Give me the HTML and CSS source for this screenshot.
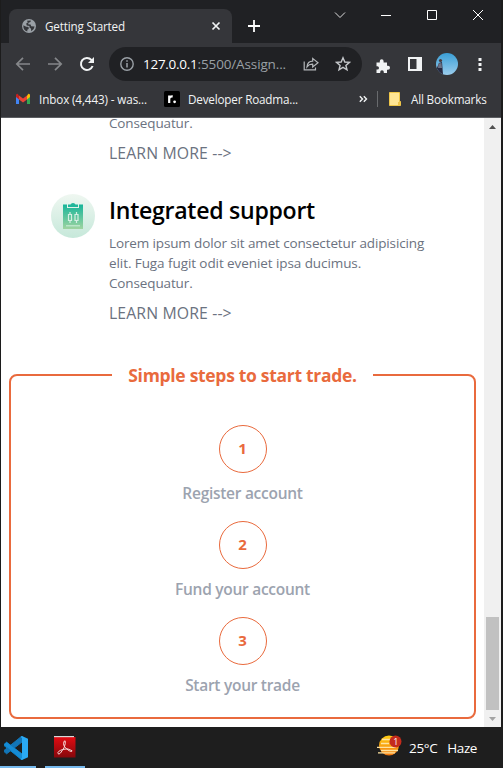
FILE: index.html
```html
<!DOCTYPE html>
<html lang="en">
<head>
<meta charset="utf-8">
<title>Getting Started</title>
<link rel="stylesheet" href="styles.css">
</head>
<body>
<div class="window">
  <header class="tabstrip">
    <div class="tab">
      <svg class="globe" width="14" height="14" viewBox="0 0 14 14"><circle cx="7" cy="7" r="7" fill="#9aa0a6"/><path d="M1.3 6.2 4.2 7.8Q6.4 7.3 6.8 8.8T5.3 10.8V12.6Q1.2 11.5 1.3 6.2ZM5 1.7 8.8 1.5 8.5 3.1 6.5 3.7 6.2 5.3 8.6 5.6 9.2 7.2 12.6 7.4Q12.2 10.7 9.2 12.2L9 9.7 7.3 8.3 7.6 6.9 4.7 6.5 4.2 4.6 5.8 3.4Z" fill="#35363a"/></svg>
      <span class="tab-title">Getting Started</span>
      <svg width="10" height="10" viewBox="0 0 10 10"><path d="M1.5 1.5 8.5 8.5M8.5 1.5 1.5 8.5" stroke="#f1f3f4" stroke-width="1.7"/></svg>
    </div>
    <svg class="new-tab" width="12" height="12" viewBox="0 0 12 12"><path d="M6 0V12M0 6H12" stroke="#fff" stroke-width="1.8"/></svg>
    <div class="controls">
      <svg width="12" height="12" viewBox="0 0 12 12"><path d="M1 3.5 6 8.5 11 3.5" fill="none" stroke="#ddd" stroke-width="1"/></svg>
      <svg width="12" height="12" viewBox="0 0 12 12"><path d="M1 6.5H11" stroke="#fff"/></svg>
      <svg width="12" height="12" viewBox="0 0 12 12"><path d="M1.5 1.5H10.5V10.5H1.5Z" fill="none" stroke="#fff"/></svg>
      <svg width="12" height="12" viewBox="0 0 12 12"><path d="M1 1 11 11M11 1 1 11" stroke="#fff"/></svg>
    </div>
  </header>
  <div class="toolbar">
    <svg class="nav" width="16" height="16" viewBox="0 0 16 16"><path d="M15 8H2M8 1.8 1.8 8 8 14.2" fill="none" stroke="#85878a" stroke-width="1.7"/></svg>
    <svg class="nav" width="16" height="16" viewBox="0 0 16 16"><path d="M1 8H14M8 1.8 14.2 8 8 14.2" fill="none" stroke="#85878a" stroke-width="1.7"/></svg>
    <svg class="nav" width="16" height="16" viewBox="0 0 16 16"><path d="M13.6 10A6 6 0 1 1 12.4 3.9L14 5.5" fill="none" stroke="#f1f3f4" stroke-width="2"/><path d="M15 1V7H9Z" fill="#f1f3f4"/></svg>
    <div class="address">
      <svg width="14" height="14" viewBox="0 0 14 14"><circle cx="7" cy="7" r="6.2" fill="none" stroke="#9aa0a6" stroke-width="1.4"/><path d="M7 6V10.5M7 3.3V4.8" stroke="#9aa0a6" stroke-width="1.5"/></svg>
      <span class="url"><span class="host">127.0.0.1</span>:5500/Assign...</span>
      <svg class="share" width="16" height="16" viewBox="0 0 16 16"><path d="M1.2 5.5V13.8H12.5V11.5M4 10.8Q4.5 5.2 9.7 5.2V2.4L15 6.7 9.7 11V8.2Q6 8 4 10.8Z" fill="none" stroke="#b4b7ba" stroke-width="1.2"/></svg>
      <svg width="16" height="16" viewBox="0 0 16 16"><path d="M8 1.8 9.8 6 14.4 6.4 10.9 9.4 12 13.8 8 11.4 4 13.8 5.1 9.4 1.6 6.4 6.2 6Z" fill="none" stroke="#c4c7ca" stroke-width="1.4"/></svg>
    </div>
    <div class="actions">
      <svg width="16" height="16" viewBox="0 0 16 16"><path d="M1.5 4.5H4.8V3.2A1.9 1.9 0 0 1 8.6 3.2V4.5H12V7.8H13A2 2 0 0 1 13 11.8H12V15H8.8V14A1.7 1.7 0 0 0 5.2 14V15H1.5V11.6H2.3A1.6 1.6 0 0 0 2.3 8.2H1.5Z" fill="#f1f3f4"/></svg>
      <svg width="14" height="14" viewBox="0 0 14 14"><path d="M0 0H14V14H0ZM2 2V12H8.5V2Z" fill="#f1f3f4" fill-rule="evenodd"/></svg>
      <svg width="22" height="22" viewBox="0 0 22 22"><defs><linearGradient id="sky" x2="0" y2="1"><stop stop-color="#3a9fd6"/><stop offset="1" stop-color="#9accec"/></linearGradient><clipPath id="round"><circle cx="11" cy="11" r="11"/></clipPath></defs><g clip-path="url(#round)"><path d="M0 0H22V22H0Z" fill="url(#sky)"/><path d="M3 10 6 9 6.5 15 7 22H3L0 17Z" fill="#26283f"/><path d="M2.5 10.5 5.5 10 6 15H2Z" fill="#6b7185"/><circle cx="4.5" cy="7.5" r="1.6" fill="#4b3b3d"/></g></svg>
      <svg width="4" height="16" viewBox="0 0 4 16"><path d="M.5 2H3.5V5H.5ZM.5 7H3.5V10H.5ZM.5 12H3.5V15H.5Z" fill="#f1f3f4"/></svg>
    </div>
  </div>
  <div class="bookmarks">
    <svg width="14" height="12" viewBox="0 0 14 12"><path d="M0 2V11H3V5Z" fill="#4285f4"/><path d="M14 2V11H11V5Z" fill="#34a853"/><path d="M11 2.5 12.5.7Q14 .5 14 2.2V4L11 6.4Z" fill="#fbbc04"/><path d="M3 2.5 1.5.7Q0 .5 0 2.2V4L3 6.4Z" fill="#c5221f"/><path d="M3 2.4 7 5.4 11 2.4V6.4L7 9.4 3 6.4Z" fill="#ea4335"/></svg>
    <span class="inbox">Inbox (4,443) - was...</span>
    <svg class="roadmap" width="16" height="16" viewBox="0 0 16 16"><rect width="16" height="16" rx="1.5" fill="#000"/><path d="M5.2 12V4.5M5.2 7.5Q5.8 5.1 8.7 5.3" fill="none" stroke="#fff" stroke-width="2.2"/><circle cx="10.6" cy="10.8" r="1.4" fill="#fff"/></svg>
    <span class="dev">Developer Roadma...</span>
    <svg class="more" width="9" height="8" viewBox="0 0 9 8"><path d="M.8 1.3 3.5 4 .8 6.7M4.8 1.3 7.5 4 4.8 6.7" fill="none" stroke="#f1f3f4" stroke-width="1.4"/></svg>
    <i class="divider"></i>
    <svg class="folder" width="12" height="14" viewBox="0 0 12 14"><path d="M.5.5H10.5V9.5H11.5V13.5H.5Z" fill="#ffe594" stroke="#f0c748"/><path d="M9 13V10H11.5V13Z" fill="#eec34a"/></svg>
    <span>All Bookmarks</span>
  </div>
  <div class="viewport">
    <main class="page">
      <article class="feature feature-clipped">
        <div class="copy">
          <p>Consequatur.</p>
          <a class="learn">LEARN MORE --&gt;</a>
        </div>
      </article>
      <article class="feature">
        <svg class="badge" width="44" height="44" viewBox="0 0 44 44"><defs><linearGradient id="disc" x2="0" y2="1"><stop stop-color="#eff7f1"/><stop offset="1" stop-color="#c6e8da"/></linearGradient><linearGradient id="board" x2="0" y2="1"><stop stop-color="#17b59a"/><stop offset="1" stop-color="#9fd4a0"/></linearGradient></defs><circle cx="22" cy="22" r="22" fill="url(#disc)"/><path d="M12 10.5H16V14H28V10.5H32V35H12Z" fill="url(#board)"/><path d="M17 13V10.5H19.5Q20 9 22 9T24.5 10.5H27V13Z" fill="#20b79b"/><path d="M19 18V20.5M19 26.5V29M25.5 18V20.5M25.5 26.5V29M17.5 20.5H20.5V26.5H17.5ZM24 20.5H27V26.5H24Z" fill="none" stroke="#d5eee3" stroke-width="1.2"/><path d="M15 31.8H29" stroke="#c6ead2" stroke-width="1.2"/></svg>
        <div class="copy">
          <h2>Integrated support</h2>
          <p>Lorem ipsum dolor sit amet consectetur adipisicing<br><span class="second-line">elit. Fuga fugit odit eveniet ipsa ducimus.</span><br>Consequatur.</p>
          <a class="learn">LEARN MORE --&gt;</a>
        </div>
      </article>
      <fieldset class="steps">
        <legend>Simple steps to start trade.</legend>
        <div class="step"><b>1</b><span>Register account</span></div>
        <div class="step"><b>2</b><span>Fund your account</span></div>
        <div class="step"><b>3</b><span>Start your trade</span></div>
      </fieldset>
    </main>
    <div class="scrollbar">
      <svg width="7" height="4" viewBox="0 0 7 4"><path d="M0 4 3.5 0 7 4Z" fill="#505050"/></svg>
      <div class="thumb"></div>
      <svg width="7" height="4" viewBox="0 0 7 4"><path d="M0 0 3.5 4 7 0Z" fill="#a3a3a3"/></svg>
    </div>
  </div>
</div>
<footer class="taskbar">
  <div class="app code"><svg width="24" height="24" viewBox="0 0 24 24"><path d="M0 8.5 2.6 6.2 18 18V24L0 9.5Z" fill="#0b83ca" stroke="#0b83ca"/><path d="M0 15.5 2.6 17.8 18 6V0L0 14.5Z" fill="#1276b8" stroke="#1276b8"/><path d="M0 8.5 2.6 6.2 18 18V24Z" fill="#168cd5"/><path d="M18 0 24 2.8V21.2L18 24 16.5 23 18 22V2L16.5 1Z" fill="#2aaaf5"/></svg></div>
  <div class="app reader"><svg width="22" height="22" viewBox="0 0 22 22"><defs><linearGradient id="red" x2="0" y2="1"><stop stop-color="#e10b12"/><stop offset="1" stop-color="#86080c"/></linearGradient></defs><path d="M0 1H21.5V21.5H0Z" fill="url(#red)"/><path d="M0 0H20V1.2H0Z" fill="#d8d8d8"/><path d="M4 17.5Q3 15.5 8.5 13.5T18 14.7Q18 17 13 13.2T10.3 5Q11.5 3.5 11.3 7.5T6.5 17Q4.7 19 4 17.5" fill="none" stroke="#f6dada" stroke-width="1"/></svg></div>
  <div class="weather">
    <svg width="25" height="22" viewBox="0 0 25 22"><defs><linearGradient id="sun" x2="0" y2="1"><stop stop-color="#ffcf12"/><stop offset="1" stop-color="#f2760c"/></linearGradient></defs><circle cx="12" cy="10.5" r="10" fill="url(#sun)"/><path d="M5 4.5H14M4 8.5H12M0 12.3H19M4 15.5H21M1 17.8H18" stroke="#ffe3a0" stroke-width="1.3"/><circle cx="18.5" cy="6.5" r="6" fill="#c42b1c"/><text x="18.5" y="10" text-anchor="middle" class="count">1</text></svg>
    <span class="temp">25°C</span><span>Haze</span>
  </div>
</footer>
</body>
</html>
```
FILE: styles.css
```css
* { box-sizing: border-box; }
body { margin: 0; width: 503px; height: 768px; overflow: hidden; background: #1c1c1c; font: 11.7px/16px "Open Sans", "Noto Sans", sans-serif; color: #f1f3f4; white-space: nowrap; }
svg { display: block; flex: none; }
.window { width: 500px; height: 727px; margin-left: 1px; display: flex; flex-direction: column; }

.tabstrip { height: 43px; display: flex; background: #202124; }
.tab { width: 223px; height: 34px; margin: 9px 0 0 8px; padding: 0 11px 0 13px; display: flex; align-items: center; border-radius: 8px 8px 0 0; background: #35363a; letter-spacing: -.18px; }
.tab-title { flex: 1; margin-left: 9px; }
.new-tab { margin: 20px 0 0 16px; }
.controls { margin: 9px 17px 0 auto; display: flex; gap: 34px; }

.toolbar { height: 42px; flex: none; padding: 0 0 0 14px; display: flex; align-items: center; background: #35363a; }
.nav { margin-right: 16px; }
.address { width: 253px; height: 34px; margin-left: -2px; padding: 0 11px 0 11px; border-radius: 17px; background: #202124; display: flex; align-items: center; }
.url { flex: 1; margin-left: 9px; font-size: 13.5px; line-height: 20px; letter-spacing: -.13px; color: #9aa0a6; }
.host { color: #fff; letter-spacing: -.27px; }
.share { margin-right: 16px; }
.actions { flex: 1; margin-left: 13px; display: flex; align-items: center; }
.actions svg:nth-child(1) { margin-top: 3px; }
.actions svg:nth-child(2) { margin-left: 17px; }
.actions svg:nth-child(3) { margin-left: 14px; }
.actions svg:nth-child(4) { margin-left: 20px; }

.bookmarks { height: 33px; flex: none; padding: 0 14px 5px 15px; display: flex; align-items: center; background: #35363a; border-bottom: 1px solid #5c5e62; letter-spacing: -.18px; }
.inbox { width: 108px; margin-left: 9px; letter-spacing: -.12px; }
.roadmap { margin: 0 8px 0 17px; }
.dev { width: 110px; }
.more { margin-left: 61px; }
.divider { width: 1px; height: 16px; margin: 0 11px 0 9px; background: #696b6e; }
.folder { margin-right: 10px; }

.viewport { flex: 1; min-height: 0; display: flex; background: #fff; }
.page { flex: 1; height: 609px; padding: 0 8px; display: flex; flex-direction: column; color: #6b7280; }
.feature { display: flex; gap: 14px; padding-left: 42px; height: 132px; }
.feature-clipped { height: 71px; padding-left: 100px; }
.feature-clipped p { margin-bottom: 5px; line-height: 10px; }
.badge { margin-top: 5px; }
.copy { display: flex; flex-direction: column; }
h2 { margin: 5px 0 7px; font-size: 23.1px; line-height: 32px; font-weight: 600; letter-spacing: -.28px; color: #000; }
p { margin: 0; font-size: 13.5px; line-height: 20px; letter-spacing: -.13px; }
.second-line { letter-spacing: -.08px; }
.learn { margin-top: 8px; font-size: 15.8px; line-height: 25px; letter-spacing: .12px; }
.steps { width: 467px; height: 358px; margin: 40px 0 0; padding: 36px 0 0; border: 2px solid #e96a3d; border-radius: 8px; text-align: center; }
legend { height: 28px; margin: 0 auto; padding: 0 16px; font-size: 17.5px; line-height: 28px; font-weight: 700; letter-spacing: -.3px; color: #e96a3d; }
.step { height: 96px; display: flex; flex-direction: column; align-items: center; }
.step b { width: 48px; height: 48px; border: 1px solid #e96a3d; border-radius: 50%; font-size: 15px; line-height: 44px; color: #e96a3d; }
.step span { margin-top: 8px; font-size: 15.5px; line-height: 24px; font-weight: 600; letter-spacing: -.28px; color: #9ca3af; }

.scrollbar { width: 17px; padding: 7px 0 6px; display: flex; flex-direction: column; align-items: center; background: #f0f0f0; }
.thumb { width: 13px; height: 93px; margin: auto 0 7px; background: #c1c1c1; }

.taskbar { height: 41px; display: flex; background: #1e1e1e; }
.app { height: 41px; border-bottom: 2px solid #76b9ed; }
.code { width: 36px; padding: 9px 0 0 4px; }
.reader { width: 40px; margin-left: 9px; padding: 9px 0 0 9px; }
.weather { margin: 0 26px 0 auto; display: flex; align-items: center; font-size: 13.5px; letter-spacing: -.4px; color: #fff; }
.weather svg { margin-top: -3px; }
.temp { margin: 0 10px 0 7px; }
.count { font: 9px "Open Sans", sans-serif; fill: #fff; }
```
